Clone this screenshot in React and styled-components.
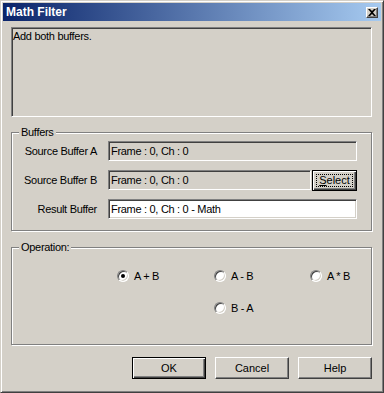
import React from 'react';
import styled, { createGlobalStyle, css } from 'styled-components';

const GlobalStyle = createGlobalStyle`
  html, body {
    margin: 0;
    padding: 0;
    background: #d4d0c8;
  }
  body {
    font-family: "Liberation Sans", Arial, sans-serif;
    font-size: 11px;
    letter-spacing: -0.3px;
    color: #000;
  }
`;

const operations = [
  { id: 'add', label: 'A + B', checked: true },
  { id: 'sub', label: 'A - B' },
  { id: 'mul', label: 'A * B' },
  { id: 'rsub', label: 'B - A', column: 2 },
];

export default function App() {
  return (
    <>
      <GlobalStyle />
      <Window>
        <TitleBar>
          <Title>Math Filter</Title>
          <CloseButton aria-label="Close">
            <svg width="8" height="7" viewBox="0 0 8 7">
              <path d="M0 0h2l2 2 2-2h2L5 3.5 8 7H6L4 5 2 7H0l3-3.5z" fill="#000" />
            </svg>
          </CloseButton>
        </TitleBar>

        <Body>
          <Description>Add both buffers.</Description>

          <Group>
            <GroupCaption>Buffers</GroupCaption>
            <FieldGrid>
              <FieldLabel>Source Buffer A</FieldLabel>
              <Field>Frame : 0, Ch : 0</Field>

              <FieldLabel>Source Buffer B</FieldLabel>
              <FieldWithButton>
                <Field>Frame : 0, Ch : 0</Field>
                <Button $default $focused $width={45}>
                  <u>S</u>elect
                </Button>
              </FieldWithButton>

              <FieldLabel>Result Buffer</FieldLabel>
              <Field $editable>Frame : 0, Ch : 0 - Math</Field>
            </FieldGrid>
          </Group>

          <Group $gapTop={16}>
            <GroupCaption>Operation:</GroupCaption>
            <RadioGrid>
              {operations.map((op) => (
                <RadioItem key={op.id} $column={op.column}>
                  <RadioCircle $checked={op.checked} />
                  <span>{op.label}</span>
                </RadioItem>
              ))}
            </RadioGrid>
          </Group>

          <ButtonRow>
            <Button $default>OK</Button>
            <Button>Cancel</Button>
            <Button>Help</Button>
          </ButtonRow>
        </Body>
      </Window>
    </>
  );
}

const Window = styled.div`
  box-sizing: border-box;
  width: 384px;
  height: 393px;
  padding: 2px;
  background: #d4d0c8;
  border: 1px solid;
  border-color: #d4d0c8 #404040 #404040 #d4d0c8;
  box-shadow: inset 1px 1px #fff, inset -1px -1px #808080;
  display: flex;
  flex-direction: column;
`;

const TitleBar = styled.div`
  height: 18px;
  display: flex;
  align-items: center;
  justify-content: space-between;
  padding: 0 2px 0 3px;
  background: linear-gradient(to right, #0a246a, #a6caf0);
`;

const Title = styled.div`
  color: #fff;
  font-weight: bold;
  font-size: 12px;
  letter-spacing: 0;
`;

const CloseButton = styled.div`
  box-sizing: border-box;
  width: 12px;
  height: 11px;
  margin-right: 1px;
  display: flex;
  align-items: center;
  justify-content: center;
  background: #d4d0c8;
  border: 1px solid;
  border-color: #fff #404040 #404040 #fff;
  box-shadow: inset -1px -1px #808080;
`;

const Body = styled.div`
  display: flex;
  flex-direction: column;
  padding: 6px 9px 0 8px;
`;

const Description = styled.div`
  box-sizing: border-box;
  height: 90px;
  border: 1px solid;
  border-color: #808080 #fff #fff #808080;
  box-shadow: inset 1px 1px #404040, inset -1px -1px #d4d0c8;
  padding: 2px 1px;
  line-height: 13px;
`;

const Group = styled.div`
  position: relative;
  box-sizing: border-box;
  margin-top: ${(p) => p.$gapTop || 15}px;
  border: 1px solid #808080;
  box-shadow: inset 1px 1px #fff, 1px 1px #fff;
  height: ${(p) => (p.$gapTop ? 98 : 99)}px;
`;

const GroupCaption = styled.span`
  position: absolute;
  top: -7px;
  left: 7px;
  padding: 0 2px;
  background: #d4d0c8;
  line-height: 13px;
`;

const FieldGrid = styled.div`
  display: grid;
  grid-template-columns: 85px 1fr;
  grid-auto-rows: 20px;
  column-gap: 11px;
  row-gap: 9px;
  align-items: center;
  padding: 8px 14px 0 0;
`;

const FieldLabel = styled.div`
  text-align: right;
`;

const Field = styled.div`
  box-sizing: border-box;
  flex: 1;
  height: 20px;
  display: flex;
  align-items: center;
  padding: 0 2px;
  border: 1px solid;
  border-color: #808080 #fff #fff #808080;
  box-shadow: inset 1px 1px #404040, inset -1px -1px #d4d0c8;
  background: ${(p) => (p.$editable ? '#fff' : '#d4d0c8')};
`;

const FieldWithButton = styled.div`
  display: flex;
  align-items: center;
  gap: 1px;
  height: 21px;
`;

const Button = styled.button`
  position: relative;
  box-sizing: border-box;
  width: ${(p) => p.$width || 74}px;
  height: ${(p) => (p.$width ? 21 : 22)}px;
  padding: 0;
  font: inherit;
  color: #000;
  background: #d4d0c8;
  border: 1px solid;
  border-color: #fff #404040 #404040 #fff;
  box-shadow: inset -1px -1px #808080, inset 1px 1px #d4d0c8;

  ${(p) =>
    p.$default &&
    css`
      border-color: #000;
      box-shadow: inset 1px 1px #fff, inset -1px -1px #404040,
        inset -2px -2px #808080;
    `}

  ${(p) =>
    p.$focused &&
    css`
      &::after {
        content: '';
        position: absolute;
        inset: 3px;
        border: 1px dotted #000;
      }
    `}
`;

const RadioGrid = styled.div`
  display: grid;
  grid-template-columns: 97px 96px auto;
  grid-auto-rows: 13px;
  row-gap: 19px;
  padding: 21px 0 0 105px;
`;

const RadioItem = styled.label`
  display: flex;
  align-items: center;
  gap: 5px;
  ${(p) => p.$column && `grid-column: ${p.$column};`}
`;

const RadioCircle = styled.span`
  position: relative;
  box-sizing: border-box;
  width: 12px;
  height: 12px;
  border-radius: 50%;
  border: 1px solid;
  border-color: #808080 #fff #fff #808080;
  box-shadow: inset 1px 1px #404040, inset -1px -1px #d4d0c8;
  background: #fff;

  ${(p) =>
    p.$checked &&
    css`
      &::after {
        content: '';
        position: absolute;
        left: 3px;
        top: 3px;
        width: 4px;
        height: 4px;
        border-radius: 50%;
        background: #000;
      }
    `}
`;

const ButtonRow = styled.div`
  display: flex;
  justify-content: flex-end;
  gap: 9px;
  margin-top: 12px;
`;
